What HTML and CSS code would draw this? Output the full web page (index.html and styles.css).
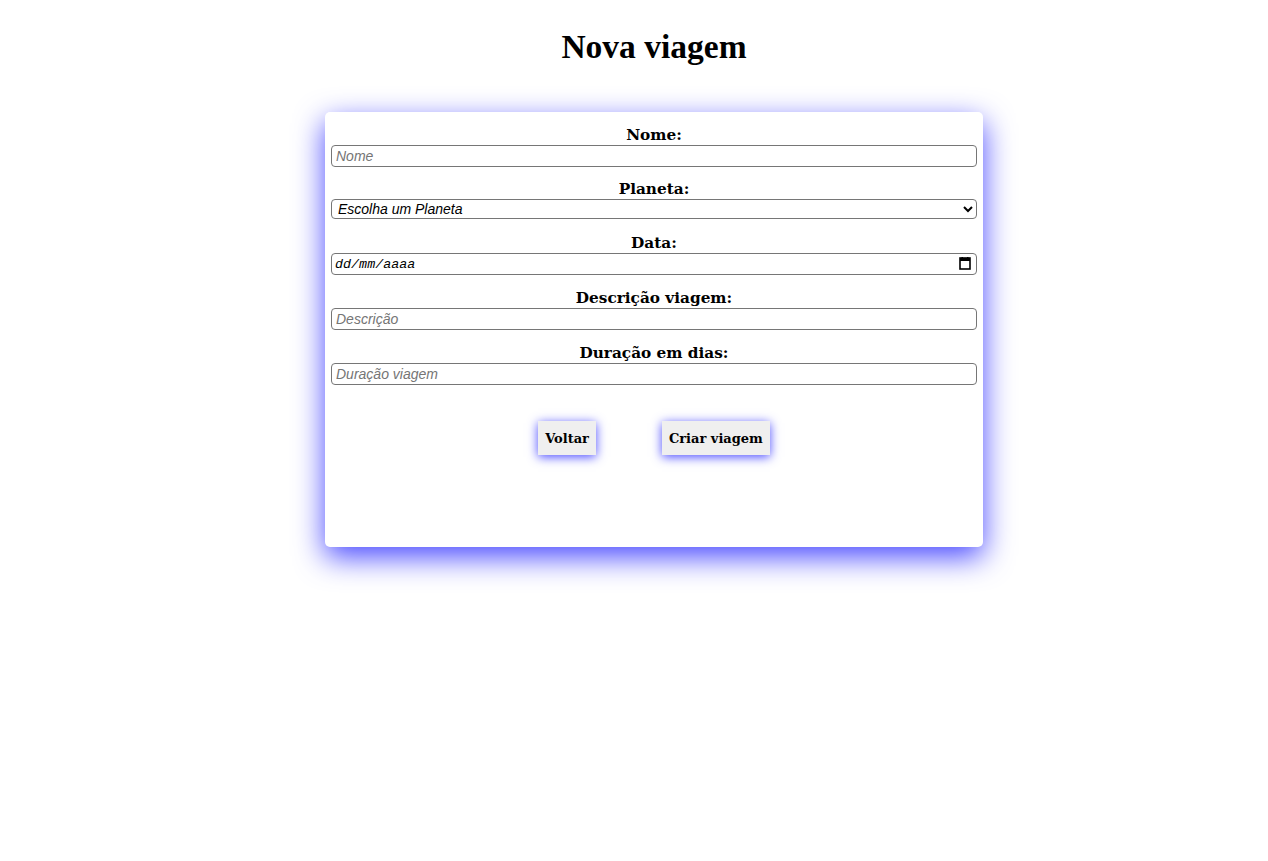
FILE: index.html
```html
<!DOCTYPE html>
<html lang="pt-BR">
<head>
<meta charset="utf-8">
<title>Nova viagem</title>
<link rel="stylesheet" href="styles.css">
</head>
<body>
<h1 class="title">Nova viagem</h1>
<div class="card">
  <form class="form">
    <div class="field first">
      <label class="label" for="nome">Nome:</label>
      <input class="control" id="nome" type="text" placeholder="Nome">
    </div>
    <div class="field second">
      <label class="label" for="planeta">Planeta:</label>
      <select class="control select" id="planeta">
        <option>Escolha um Planeta</option>
      </select>
    </div>
    <div class="field">
      <label class="label" for="data">Data:</label>
      <div class="date-wrap">
        <input class="control date" id="data" type="text" placeholder="dd/mm/aaaa">
        <svg class="cal" width="12" height="13" viewBox="0 0 12 13" aria-hidden="true">
          <rect x="1" y="1" width="10" height="11" fill="none" stroke="#000" stroke-width="1.6"/>
          <rect x="1" y="1" width="10" height="3" fill="#000"/>
          <rect x="2.5" y="0" width="1.5" height="2" fill="#000"/>
          <rect x="8" y="0" width="1.5" height="2" fill="#000"/>
        </svg>
      </div>
    </div>
    <div class="field">
      <label class="label" for="desc">Descrição viagem:</label>
      <input class="control" id="desc" type="text" placeholder="Descrição">
    </div>
    <div class="field">
      <label class="label" for="dur">Duração em dias:</label>
      <input class="control" id="dur" type="text" placeholder="Duração viagem">
    </div>
    <div class="actions">
      <button class="btn" type="button">Voltar</button>
      <button class="btn" type="button">Criar viagem</button>
    </div>
  </form>
</div>
</body>
</html>
```
FILE: styles.css
```css
body {
  margin: 8px 8px 8px 48px;
  padding-bottom: 120px;
  font-family: "Liberation Serif", serif;
  background: #fff;
}
.title {
  text-align: center;
  font-size: 33.5px;
  font-weight: bold;
  margin: 20px 0 24px;
}
.card {
  width: 646px;
  margin: 46px auto 0;
  padding: 13px 6px 0;
  height: 422px;
  background: #fff;
  border-radius: 5px;
  box-shadow: 0 10px 30px rgba(0, 0, 255, 0.72);
}
.form {
  display: flex;
  flex-direction: column;
}
.field {
  display: flex;
  flex-direction: column;
  margin-bottom: 13px;
}
.field.first {
  margin-bottom: 12px;
}
.field.second {
  margin-bottom: 14px;
}
.label {
  text-align: center;
  font-family: "DejaVu Serif", serif;
  font-weight: bold;
  font-size: 15.3px;
  line-height: 20px;
  color: #000;
}
.control {
  box-sizing: border-box;
  width: 100%;
  height: 22px;
  margin: 0;
  border: 1px solid #767676;
  border-radius: 4px;
  font-family: "Liberation Sans", Arial, sans-serif;
  font-size: 14px;
  font-style: italic;
  padding: 1px 4px;
  background: #fff;
  color: #000;
}
.control::placeholder {
  color: #757575;
}
.select {
  height: 20px;
  padding: 0 2px;
}
.date-wrap {
  position: relative;
}
.date {
  font-family: "Liberation Mono", monospace;
  font-size: 13.4px;
  padding: 1px 3px;
}
.date::placeholder {
  color: #000;
}
.cal {
  position: absolute;
  right: 6px;
  top: 4px;
}
.actions {
  display: flex;
  justify-content: center;
  gap: 66px;
  margin-top: 23px;
}
.btn {
  background: #efefef;
  border: none;
  padding: 0 7px;
  height: 34px;
  font-family: "DejaVu Serif", serif;
  font-weight: bold;
  font-size: 13px;
  color: #000;
  box-shadow: 0 2px 10px rgba(0, 0, 255, 0.7);
  cursor: pointer;
}
```
